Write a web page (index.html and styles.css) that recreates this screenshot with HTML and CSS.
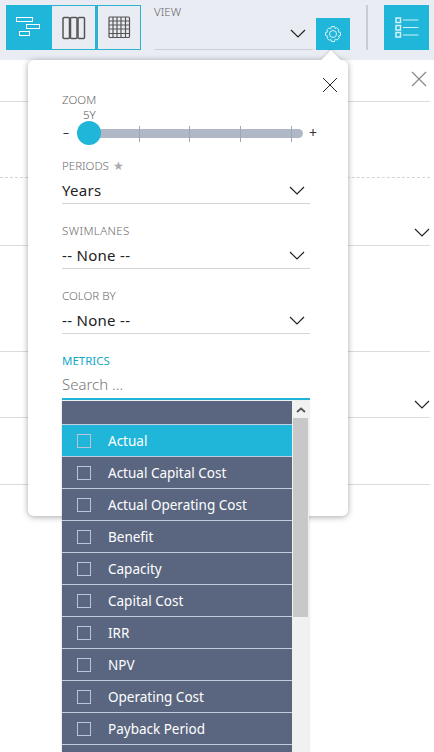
FILE: index.html
```html
<!DOCTYPE html>
<html lang="en">
<head>
<meta charset="utf-8">
<title>Roadmap view settings</title>
<link rel="stylesheet" href="styles.css">
</head>
<body>
<header class="toolbar">
  <div class="view-switch">
    <button class="tool tool-on"><svg width="26" height="21" viewBox="0 0 26 21"><g fill="none" stroke="#fff" stroke-width="1"><rect x="0.5" y="0.5" width="16" height="4"/><rect x="10.5" y="7.5" width="13" height="4"/><rect x="3.5" y="14.5" width="10" height="4"/></g></svg></button>
    <button class="tool tool-mid"><svg width="24" height="24" viewBox="0 0 24 24"><g fill="none" stroke="#555" stroke-width="1.5"><rect x="1" y="1.5" width="6.5" height="21" rx="1"/><rect x="8.5" y="1.5" width="6.5" height="21" rx="1"/><rect x="16" y="1.5" width="6.5" height="21" rx="1"/></g></svg></button>
    <button class="tool tool-thick"><svg width="23" height="23" viewBox="0 0 23 23"><g fill="none" stroke="#555" stroke-width="1.2"><rect x="1" y="1" width="20.5" height="20.5" rx="1"/><path d="M5 1V21.500M9 1V21.500M13 1V21.500M17.500 1V21.500M1 5H21.500M1 9H21.500M1 13H21.500M1 17.500H21.500"/></g></svg></button>
  </div>
  <div class="view-field">
    <span class="view-label">VIEW</span>
    <div class="view-select"><svg class="chev" width="16" height="9" viewBox="0 0 16 9"><path d="M1 1L8 8L15 1" fill="none" stroke="#222" stroke-width="1.2"/></svg></div>
  </div>
  <button class="gear"><svg width="18" height="18" viewBox="0 0 18 18"><g fill="none" stroke="#d5f2f8" stroke-width="1"><circle cx="9" cy="9" r="3.500"/><path d="M7.500 1.500H10.500L11 3.500L12.800 2.700L15 4.900L14.200 6.800L16.500 7.500V10.500L14.500 11L15.300 12.800L13.100 15L11.200 14.200L10.500 16.500H7.500L7 14.500L5.200 15.300L3 13.100L3.800 11.200L1.500 10.500V7.500L3.500 7L2.700 5.200L4.900 3L6.800 3.800Z"/></g></svg></button>
  <span class="divider"></span>
  <button class="tool tool-on tool-list"><svg width="24" height="21" viewBox="0 0 24 21"><g fill="none" stroke="#d5f2f8"><rect x="1" y="1" width="4.500" height="4.500" stroke-width="1.500"/><rect x="1" y="8.500" width="4.500" height="4.500" stroke-width="1.500"/><rect x="1" y="15.500" width="4.500" height="4.500" stroke-width="1.500"/><path d="M8 3H23.500M8 10.500H23.500M8 18H23.500"/></g></svg></button>
</header>

<main class="rows">
  <div class="row row-a"><svg class="close" width="16" height="16" viewBox="0 0 16 16"><path d="M1 1L15 15M15 1L1 15" stroke="#888" stroke-width="1.200"/></svg></div>
  <div class="row row-b"></div>
  <div class="row row-c"><svg class="chev" width="16" height="9" viewBox="0 0 16 9"><path d="M1 1L8 8L15 1" fill="none" stroke="#222" stroke-width="1.2"/></svg></div>
  <div class="row row-d"></div>
  <div class="row row-f"><svg class="chev" width="16" height="9" viewBox="0 0 16 9"><path d="M1 1L8 8L15 1" fill="none" stroke="#222" stroke-width="1.2"/></svg></div>
  <div class="row row-g"></div>
</main>

<section class="popover">
  <span class="notch"></span>
  <svg class="popover-close" width="18" height="18" viewBox="0 0 18 18"><path d="M2 2L16 16M16 2L2 16" stroke="#222" stroke-width="1"/></svg>

  <div class="zoom">
    <span class="label">ZOOM</span>
    <span class="zoom-value">5Y</span>
    <div class="slider">
      <span class="sign">–</span>
      <div class="track">
        <i class="tick t1"></i><i class="tick t2"></i><i class="tick t3"></i><i class="tick t4"></i>
        <span class="knob"></span>
      </div>
      <span class="sign sign-plus">+</span>
    </div>
  </div>

  <div class="field field-first">
    <span class="label">PERIODS <span class="star">★</span></span>
    <div class="select"><span>Years</span><svg class="chev" width="16" height="9" viewBox="0 0 16 9"><path d="M1 1L8 8L15 1" fill="none" stroke="#222" stroke-width="1.2"/></svg></div>
  </div>
  <div class="field">
    <span class="label label-wide">SWIMLANES</span>
    <div class="select"><span>-- None --</span><svg class="chev" width="16" height="9" viewBox="0 0 16 9"><path d="M1 1L8 8L15 1" fill="none" stroke="#222" stroke-width="1.2"/></svg></div>
  </div>
  <div class="field">
    <span class="label">COLOR BY</span>
    <div class="select"><span>-- None --</span><svg class="chev" width="16" height="9" viewBox="0 0 16 9"><path d="M1 1L8 8L15 1" fill="none" stroke="#222" stroke-width="1.2"/></svg></div>
  </div>
  <div class="field">
    <span class="label label-active">METRICS</span>
    <div class="search">Search ...</div>
  </div>
</section>

<div class="listbox">
  <ul class="options">
    <li class="option option-blank"></li>
    <li class="option option-hot"><i class="check"></i>Actual</li>
    <li class="option"><i class="check"></i>Actual Capital Cost</li>
    <li class="option"><i class="check"></i>Actual Operating Cost</li>
    <li class="option"><i class="check"></i>Benefit</li>
    <li class="option"><i class="check"></i>Capacity</li>
    <li class="option"><i class="check"></i>Capital Cost</li>
    <li class="option"><i class="check"></i>IRR</li>
    <li class="option"><i class="check"></i>NPV</li>
    <li class="option"><i class="check"></i>Operating Cost</li>
    <li class="option"><i class="check"></i>Payback Period</li>
    <li class="option"></li>
  </ul>
  <div class="scrollbar">
    <span class="scroll-up"><svg width="10" height="6" viewBox="0 0 10 6"><path d="M1 5L5 1.500L9 5" fill="none" stroke="#555" stroke-width="1.800"/></svg></span>
    <span class="scroll-thumb"></span>
  </div>
</div>
</body>
</html>
```

FILE: styles.css
```css
* { box-sizing: border-box; }
html, body { margin: 0; height: 100%; }
body {
  height: 752px;
  overflow: hidden;
  position: relative;
  background: #fff;
  font-family: "Noto Sans", "Open Sans", sans-serif;
  color: #222;
}
button { padding: 0; margin: 0; border: 0; background: none; font: inherit; }
svg { display: block; }

.toolbar {
  height: 60px;
  background: #e9ecf3;
  display: flex;
  align-items: flex-start;
  padding: 5px 0 0 6px;
}
.view-switch { display: flex; }
.tool {
  width: 45px;
  height: 45px;
  display: flex;
  align-items: center;
  justify-content: center;
  border: 1px solid #2cb3cf;
  border-left: 0;
}
.tool-on { background: #1fb6d9; border: 0; width: 46px; }
.tool-mid { width: 44px; }
.tool-thick { border-left: 2px solid #2cb3cf; }
.view-field { width: 159px; margin-left: 13px; height: 45px; display: flex; flex-direction: column; }
.view-label { font-size: 11.500px; line-height: 14px; color: #666; font-weight: 300; }
.view-select {
  flex: 1;
  display: flex;
  justify-content: flex-end;
  align-items: flex-start;
  padding: 10px 7px 0 0;
  border-bottom: 1px solid #cdd0d6;
}
.gear {
  width: 34px;
  height: 32px;
  margin: 13px 0 0 3px;
  background: #1fb6d9;
  display: flex;
  align-items: center;
  justify-content: center;
}
.divider { width: 2px; height: 45px; margin: 0 16px; background: #c9ccd3; }
.tool-list { width: 45px; }

.rows { width: 430px; }
.row { display: flex; justify-content: flex-end; align-items: flex-end; border-bottom: 1px solid #dcdcdc; }
.row-a { height: 42px; align-items: flex-start; padding: 11px 3px 0 0; }
.row-b { height: 76px; border-bottom: 1px dashed #d4d4d4; }
.row-c { height: 68px; padding-bottom: 8px; }
.row-d { height: 106px; }
.row-f { height: 66px; padding-bottom: 8px; }
.row-g { height: 67px; }

.popover {
  position: absolute;
  left: 28px;
  top: 60px;
  width: 320px;
  height: 456px;
  padding: 34px 38px 0 34px;
  background: #fff;
  border-radius: 6px;
  box-shadow: 0 1px 6px rgba(0, 0, 0, .35);
}
.notch {
  position: absolute;
  left: 296px;
  top: -7px;
  width: 14px;
  height: 14px;
  background: #fff;
  transform: rotate(45deg);
  box-shadow: -1px -1px 2px rgba(0, 0, 0, .12);
}
.popover-close { position: absolute; left: 293px; top: 16px; }

.label {
  display: block;
  font-size: 11.500px;
  line-height: 12px;
  color: #6a6a6a;
  font-weight: 300;
}
.label-wide { letter-spacing: .4px; }
.label-active { color: #14a9c6; font-weight: 400; }
.star { font-family: "DejaVu Sans", sans-serif; color: #aaa; font-size: 12px; margin-left: 1px; }

.zoom-value {
  display: block;
  margin: 3px 0 0 21px;
  font-size: 11.500px;
  line-height: 12px;
  color: #555;
  font-weight: 300;
}
.slider { display: flex; align-items: center; height: 24px; }
.sign { flex: none; width: 19px; padding-left: 1px; font-size: 12px; line-height: 24px; color: #333; }
.sign-plus { margin-left: 6px; width: auto; padding: 0; font-size: 14px; }
.track {
  position: relative;
  flex: none;
  width: 214px;
  height: 9px;
  margin-left: 8px;
  border-radius: 0 5px 5px 0;
  background: #b0b8c8;
}
.tick { position: absolute; top: -3px; width: 1px; height: 16px; background: #9ea6b5; }
.t1 { left: 50px; }
.t2 { left: 100px; }
.t3 { left: 151px; }
.t4 { left: 202px; }
.knob {
  position: absolute;
  left: -12px;
  top: -8px;
  width: 24px;
  height: 24px;
  border-radius: 50%;
  background: #1fb6d9;
}

.field { margin-top: 21px; }
.field-first { margin-top: 15px; }
.select {
  height: 32px;
  display: flex;
  justify-content: space-between;
  align-items: center;
  padding: 4px 5px 0 0;
  border-bottom: 1px solid #d5d5d5;
  font-size: 15px;
  letter-spacing: .3px;
}
.select .chev { margin-top: 2px; }
.search {
  height: 33px;
  padding-top: 6px;
  line-height: 22px;
  font-size: 15px;
  font-weight: 300;
  color: #777;
  border-bottom: 2px solid #1fb6d9;
}

.listbox {
  position: absolute;
  left: 62px;
  top: 401px;
  width: 247px;
  height: 351px;
  display: flex;
  overflow: hidden;
  box-shadow: 0 0 2px rgba(0, 0, 0, .2);
}
.options { flex: 1; margin: 0; padding: 0; list-style: none; }
.option {
  height: 32px;
  display: flex;
  align-items: center;
  padding-left: 15px;
  background: #5a6680;
  border-bottom: 1px solid #c3cde0;
  color: #fff;
  font-size: 13.500px;
}
.option-blank { height: 24px; }
.option-hot { background: #1fb6d9; }
.check {
  width: 14px;
  height: 14px;
  margin-right: 17px;
  border: 1px solid #b9c4d6;
}
.scrollbar { width: 17px; background: #f1f1f1; display: flex; flex-direction: column; align-items: center; }
.scroll-up { height: 17px; display: flex; align-items: center; justify-content: center; }
.scroll-thumb { width: 15px; height: 199px; background: #c8c8c8; }
```
